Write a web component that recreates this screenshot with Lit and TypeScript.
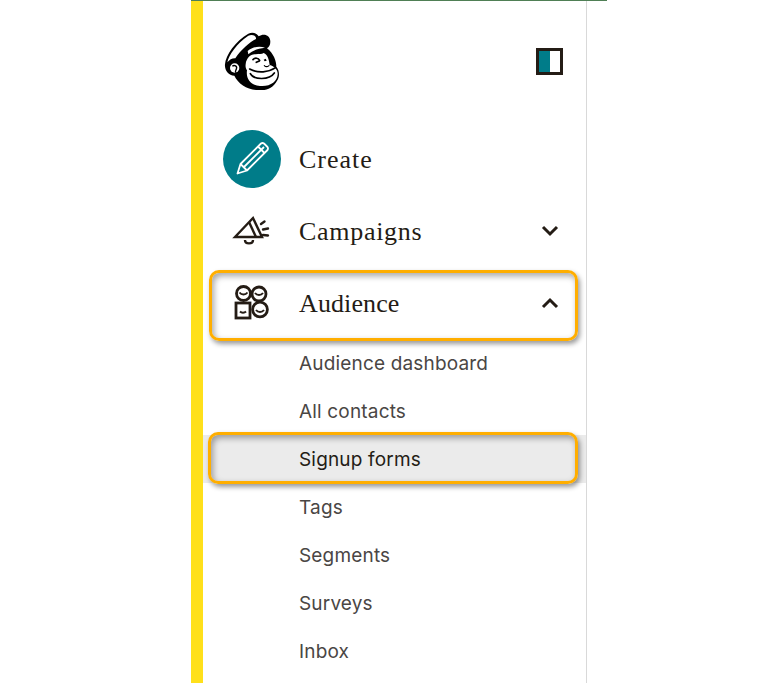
import { LitElement, html, css, svg } from "lit";
import { customElement } from "lit/decorators.js";

const subs = ["Audience dashboard", "All contacts", "Signup forms", "Tags", "Segments", "Surveys", "Inbox"];

const freddie = svg`<svg class="logo" viewBox="0 0 225 210" width="75" height="70">
  <path fill="#000" d="M30 118C32 90 62 48 100 26C115 20 126 26 131 34C146 24 166 30 166 50C166 60 162 66 156 70C176 86 184 108 184 126C194 136 194 156 187 166C174 190 156 197 135 195C102 197 70 178 58 152C40 152 28 134 30 118Z"/>
  <path fill="#fff" d="M37 112C41 90 66 55 100 32C112 27 124 32 123 42C105 50 76 76 61 100C53 99 43 104 37 112Z"/>
  <path fill="#fff" d="M98 78C112 66 132 62 150 68C130 70 112 76 100 88Z"/>
  <circle cx="59" cy="129" r="14" fill="#fff"/>
  <path fill="none" stroke="#000" stroke-width="4" d="M52 124C58 118 68 124 64 132C62 138 60 140 62 143"/>
  <path fill="#fff" d="M92 118C94 98 108 86 122 88C132 86 140 88 146 84C158 88 162 104 164 120C178 124 189 134 188 148C187 170 165 186 135 183C108 181 92 162 96 136C92 130 91 124 92 118Z"/>
  <path fill="none" stroke="#000" stroke-width="5" stroke-linecap="round" d="M114 104C120 97 130 99 134 106M133 108L124 112"/>
  <path fill="#000" d="M146 104L152 101L155 107L149 109Z"/>
  <path fill="none" stroke="#000" stroke-width="3.5" stroke-linecap="round" d="M148 122C152 126 157 126 162 122"/>
  <path fill="none" stroke="#000" stroke-width="5" stroke-linecap="round" d="M104 132C130 146 160 142 182 128"/>
  <path fill="none" stroke="#000" stroke-width="5" stroke-linecap="round" d="M106 146C116 165 163 166 178 144"/>
</svg>`;

const pencil = svg`<svg viewBox="0 0 58 58" width="58" height="58" fill="none" stroke="#fff" stroke-width="1.8" stroke-linejoin="round">
  <path d="M14.5 43.5 L17.5 34 L38 13.5 Q39.5 12.5 41 13.5 L44.5 17 Q45.5 18.5 44.5 20 L24 40.5 Z"/>
  <path d="M21 37 L41 17 M17.5 34 L24 40.5 M35 16.5 L41.5 23"/>
</svg>`;

const megaphone = svg`<svg viewBox="0 0 44 40" width="44" height="40" fill="none" stroke="#241c15" stroke-width="2.4" stroke-linejoin="miter">
  <path d="M5 26 L23 7 L32 26 Z"/>
  <path d="M19 11 L26 26"/>
  <path stroke-linecap="round" d="M31 13 L34.5 10.5 M33 18.5 L38 17.5 M33 24 L38 24.5"/>
  <path d="M15 29 C15 33.5 23 33.5 23 29"/>
</svg>`;

const audience = svg`<svg viewBox="0 0 44 40" width="44" height="40" fill="none" stroke="#241c15" stroke-width="2.8">
  <circle cx="13.5" cy="10.5" r="7"/>
  <circle cx="29" cy="11" r="7"/>
  <circle cx="30" cy="26.5" r="7.4"/>
  <rect x="6" y="20" width="14" height="15" fill="#fff"/>
  <path stroke-width="2" d="M9.5 9.5 C11.5 12 15.5 12 17.5 9.5 M25 10 C27 12.5 31 12.5 33 10 M26 27 C28 29.5 32 29.5 34 27 M10 28.5 C11.5 30 14.5 30 16 28.5"/>
</svg>`;

const chevron = (up: boolean) => svg`<svg class="chev" viewBox="0 0 18 12" width="18" height="12" fill="none" stroke="#241c15" stroke-width="3">
  <path d=${up ? "M2 10 L9 3 L16 10" : "M2 2 L9 9 L16 2"}/>
</svg>`;

@customElement("app-root")
export class AppRoot extends LitElement {
  static styles = css`
    :host { display: block; width: 782px; height: 683px; overflow: hidden; background: #fff; }
    .page { margin-left: 191px; width: 416px; height: 683px; border-top: 1px solid #4f7f55; box-sizing: border-box; }
    .side { width: 396px; height: 682px; box-sizing: border-box; border-left: 12px solid #ffe01b; border-right: 1px solid #d9d9d9; }
    .head { height: 122px; display: flex; align-items: flex-start; justify-content: space-between; padding: 24px 23px 0 12px; box-sizing: border-box; }
    .logo { display: block; }
    .toggle { margin-top: 23px; width: 27px; height: 27px; box-sizing: border-box; border: 3px solid #241c15; background: linear-gradient(90deg, #007c89 0 11px, #fff 11px); }
    .row { position: relative; height: 72px; display: flex; align-items: center; padding: 0 27px 0 20px; font: 26px/1 "Liberation Serif", serif; letter-spacing: 0.7px; color: #241c15; }
    .row.tight { letter-spacing: 0.1px; }
    .row.wide { letter-spacing: 1px; }
    .ico { width: 58px; height: 58px; display: flex; align-items: center; justify-content: center; margin-right: 18px; flex: none; }
    .circle { background: #007c89; border-radius: 50%; }
    .label { flex: 1; padding-top: 2px; }
    .chev { display: block; }
    .sub { position: relative; height: 48px; display: flex; align-items: center; padding-left: 96px; font: 19px/1 Inter, sans-serif; letter-spacing: 0.17px; color: #4a4644; }
    .sub.active { background: #ebebeb; color: #241c15; }
    .mark { position: absolute; border: 3px solid #ffae00; border-radius: 10px; box-sizing: border-box; box-shadow: 2px 3px 5px rgba(0,0,0,.4), inset 2px 3px 6px rgba(0,0,0,.35); pointer-events: none; }
    .mark.a { left: 6px; right: 8px; top: 3px; bottom: -2px; }
    .mark.b { left: 5px; right: 8px; top: -3px; bottom: -1px; }
  `;

  render() {
    return html`<div class="page"><div class="side">
      <div class="head">${freddie}<div class="toggle"></div></div>
      <div class="row wide"><div class="ico circle">${pencil}</div><span class="label">Create</span></div>
      <div class="row"><div class="ico">${megaphone}</div><span class="label">Campaigns</span>${chevron(false)}</div>
      <div class="row tight"><div class="ico">${audience}</div><span class="label">Audience</span>${chevron(true)}<div class="mark a"></div></div>
      ${subs.map((s, i) => html`<div class="sub ${i === 2 ? "active" : ""}">${s}${i === 2 ? html`<div class="mark b"></div>` : ""}</div>`)}
    </div></div>`;
  }
}
